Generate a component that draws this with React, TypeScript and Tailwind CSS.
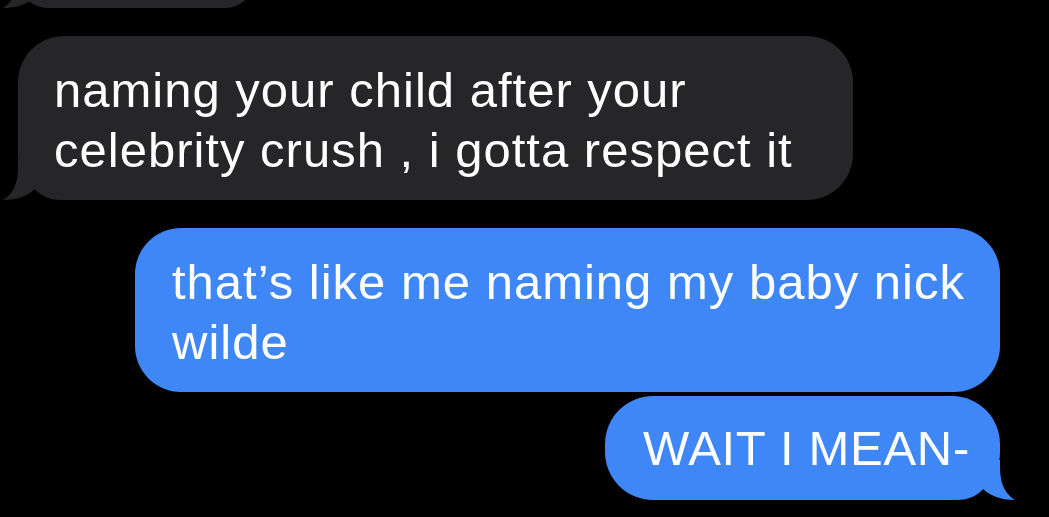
type Side = "in" | "out";

function Tail({ side, color }: { side: Side; color: string }) {
  if (side === "in") {
    return (
      <svg
        className="absolute bottom-0 left-[-16px]"
        width="60"
        height="40"
        viewBox="0 0 60 40"
      >
        <path
          d="M16,0 L16,8 C16,26 9,35 1,40 C12,40 25,37 33,29 C38,35 46,40 60,40 L60,0 Z"
          fill={color}
        />
      </svg>
    );
  }
  return (
    <svg
      className="absolute bottom-0 right-[-16px]"
      width="60"
      height="40"
      viewBox="0 0 60 40"
    >
      <path
        d="M44,0 L44,8 C44,26 51,35 59,40 C48,40 35,37 27,29 C22,35 14,40 0,40 L0,0 Z"
        fill={color}
      />
    </svg>
  );
}

const GRAY = "#262628";
const BLUE = "#3f87f6";

export default function App() {
  return (
    <div className="w-[1049px] h-[517px] overflow-hidden bg-black font-['Liberation_Sans',Arial,sans-serif] text-white">
      <div className="flex flex-col pl-[18px] pr-[49px]">
        {/* previous message, cut off at the top */}
        <div className="relative self-start w-[237px] h-[60px] -mt-[52px] rounded-[44px] bg-[#262628]">
          <Tail side="in" color={GRAY} />
        </div>

        <div className="relative self-start mt-[28px] w-[835px] rounded-[46px] bg-[#262628] pl-[36px] pt-[24px] pb-[20px] text-[49px] leading-[60px] tracking-[1px] whitespace-nowrap">
          <Tail side="in" color={GRAY} />
          <p className="relative">
            naming your child after your
            <br />
            celebrity crush , i gotta respect it
          </p>
        </div>

        <div className="relative self-end mt-[28px] w-[865px] rounded-[46px] bg-[#3f87f6] pl-[37px] pt-[24px] pb-[20px] text-[49px] leading-[60px] tracking-[1px] whitespace-nowrap">
          <p>
            that’s like me naming my baby nick
            <br />
            wilde
          </p>
        </div>

        <div className="relative self-end mt-[4px] w-[395px] rounded-[48px] bg-[#3f87f6] pl-[38px] py-[22px] text-[49px] leading-[60px] tracking-[0.7px] whitespace-nowrap">
          <Tail side="out" color={BLUE} />
          <p className="relative">WAIT I MEAN-</p>
        </div>
      </div>
    </div>
  );
}
